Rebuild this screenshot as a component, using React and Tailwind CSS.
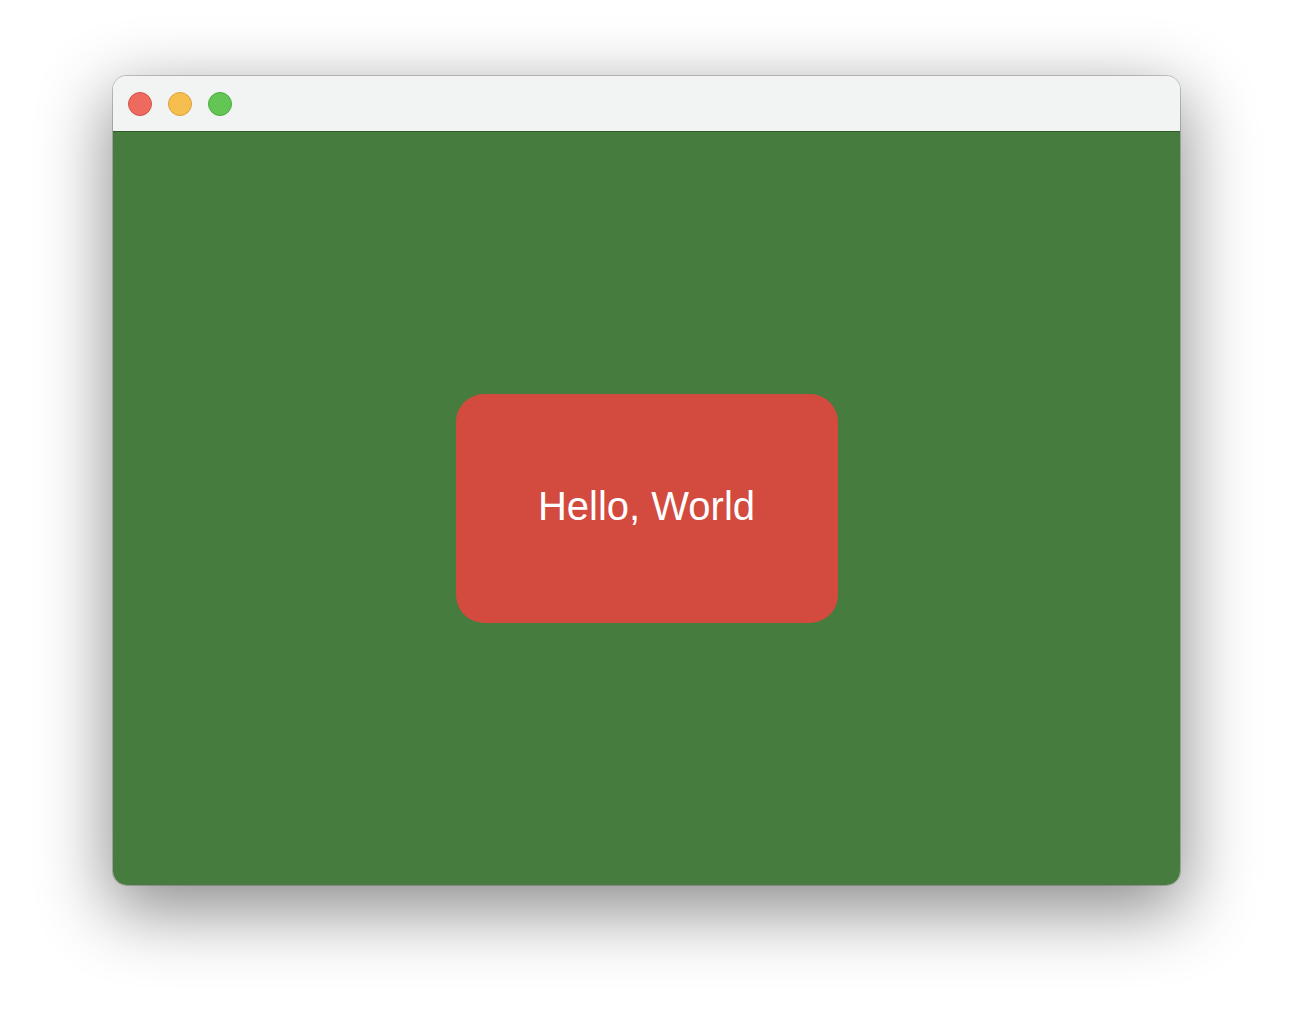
import React from 'react';

const dots = [
    'bg-[#ee6a5f] border-[#d5524a]',
    'bg-[#f5be4f] border-[#d9a23a]',
    'bg-[#62c554] border-[#4caa3f]',
];

const App = () => {
    return (
        <div className="min-h-screen bg-white pt-[76px] font-['Liberation_Sans',Arial,sans-serif]">
            <div className="ml-[113px] w-[1067px] h-[809px] rounded-[14px] overflow-hidden flex flex-col shadow-[0_0_0_1px_rgba(0,0,0,0.2),0_22px_70px_4px_rgba(0,0,0,0.45)]">
                <div className="h-[56px] shrink-0 bg-[#f2f4f3] border-b border-[#2f5c28] flex items-center gap-[16px] pl-[15px]">
                    {dots.map((c, i) => (
                        <span key={i} className={`w-[24px] h-[24px] rounded-full border ${c}`}></span>
                    ))}
                </div>
                <div className="flex-1 bg-[#467c3d] flex items-center justify-center">
                    <div className="w-[382px] h-[229px] rounded-[28px] bg-[#d34a3f] flex items-center justify-center pb-[6px]">
                        <span className="text-white text-[40px] leading-none">Hello, World</span>
                    </div>
                </div>
            </div>
        </div>
    );
};

export default App;
